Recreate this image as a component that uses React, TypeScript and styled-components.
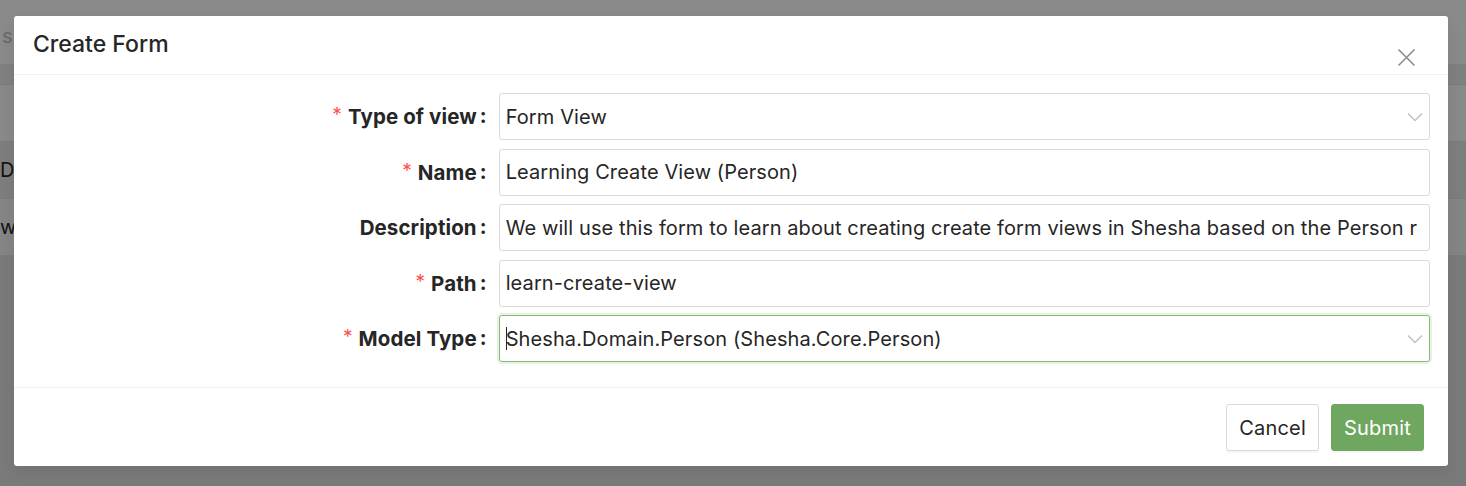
import React from 'react'
import styled, { createGlobalStyle } from 'styled-components'

const GlobalStyle = createGlobalStyle`
  * { box-sizing: border-box; }
  body {
    margin: 0;
    font-family: Inter, "Noto Sans", "Liberation Sans", sans-serif;
    color: #262626;
  }
`

const Page = styled.div`
  position: relative;
  width: 1466px;
  height: 486px;
  overflow: hidden;
  background: #dedede;
`

/* the page behind the dialog, only its edges show */
const BackPage = styled.div`
  display: flex;
  flex-direction: column;
`

const BackToolbar = styled.div`
  height: 65px;
  background: #fbfbfb;
  border-bottom: 1px solid #e6e6e6;
  padding: 24px 0 0 2px;
  font-size: 20px;
  color: #bfbfbf;
`

const BackRow = styled.div<{ $bg: string; $h: number }>`
  height: ${(p) => p.$h}px;
  background: ${(p) => p.$bg};
  border-bottom: 1px solid #e0e0e0;
  display: flex;
  align-items: center;
  font-size: 20px;
  color: #262626;
  white-space: nowrap;
  overflow: hidden;
`

const Backdrop = styled.div`
  position: absolute;
  inset: 0;
  background: rgba(0, 0, 0, 0.45);
`

const Modal = styled.div`
  position: absolute;
  top: 16px;
  left: 14px;
  width: 1434px;
  background: #fff;
  border-radius: 3px;
  box-shadow: 0 6px 16px rgba(0, 0, 0, 0.08);
`

const Header = styled.div`
  height: 59px;
  padding: 0 19px;
  display: flex;
  align-items: center;
  border-bottom: 1px solid #f0f0f0;
`

const Title = styled.div`
  font-size: 23px;
  font-weight: 500;
  color: #262626;
  padding-bottom: 2px;
`

const CloseButton = styled.button`
  position: absolute;
  top: 31px;
  right: 32px;
  width: 20px;
  height: 20px;
  padding: 0;
  border: 0;
  background: none;
  display: flex;
  align-items: center;
  justify-content: center;
  cursor: pointer;
`

const Body = styled.div`
  padding: 18px 18px 25px 19px;
  display: flex;
  flex-direction: column;
  gap: 8.5px;
`

const Row = styled.div`
  display: grid;
  grid-template-columns: 33.333% 1fr;
  align-items: center;
`

const Label = styled.label`
  display: flex;
  justify-content: flex-end;
  align-items: center;
  font-size: 20.5px;
  font-weight: 700;
  letter-spacing: 0.1px;
  color: #262626;
  white-space: nowrap;
`

const Required = styled.span`
  color: #ff4d4f;
  font-size: 19px;
  font-weight: 400;
  margin-right: 6px;
  position: relative;
  top: -2px;
`

const Colon = styled.span`
  margin: 0 12px 0 3px;
  position: relative;
  top: -1px;
`

const Field = styled.div<{ $focused?: boolean }>`
  height: 47px;
  display: flex;
  align-items: center;
  padding: 0 30px 0 6px;
  position: relative;
  border: 1px solid ${(p) => (p.$focused ? '#86bb76' : '#d9d9d9')};
  box-shadow: ${(p) => (p.$focused ? '0 0 0 2px rgba(111, 166, 95, 0.16)' : 'none')};
  border-radius: 3px;
  font-size: 20px;
  letter-spacing: 0.1px;
  color: #262626;
  white-space: nowrap;
  overflow: hidden;
`

const Caret = styled.span`
  display: inline-block;
  width: 1.5px;
  height: 23px;
  background: #262626;
  margin-right: -1.5px;
`

const Chevron = styled.svg`
  position: absolute;
  right: 6px;
  top: 50%;
  transform: translateY(-50%);
`

const Footer = styled.div`
  border-top: 1px solid #f0f0f0;
  padding: 16px 24px 15px;
  display: flex;
  justify-content: flex-end;
  gap: 12px;
`

const Button = styled.button<{ $primary?: boolean }>`
  height: 47px;
  padding: 0 12px;
  font-family: inherit;
  font-size: 20px;
  letter-spacing: 0.2px;
  border-radius: 3px;
  border: 1px solid ${(p) => (p.$primary ? '#70a760' : '#d9d9d9')};
  background: ${(p) => (p.$primary ? '#70a760' : '#fff')};
  color: ${(p) => (p.$primary ? '#fff' : '#262626')};
  box-shadow: 0 2px 0 rgba(0, 0, 0, 0.03);
  cursor: pointer;
`

const ChevronDown = () => (
  <Chevron width="16" height="10" viewBox="0 0 16 10" fill="none">
    <path d="M1 1.5 L8 8.5 L15 1.5" stroke="#bfbfbf" strokeWidth="1.3" />
  </Chevron>
)

type FieldDef = {
  label: string
  value: string
  required?: boolean
  select?: boolean
  focused?: boolean
}

const fields: FieldDef[] = [
  { label: 'Type of view', value: 'Form View', required: true, select: true },
  { label: 'Name', value: 'Learning Create View (Person)', required: true },
  {
    label: 'Description',
    value: 'We will use this form to learn about creating create form views in Shesha based on the Person r',
  },
  { label: 'Path', value: 'learn-create-view', required: true },
  {
    label: 'Model Type',
    value: 'Shesha.Domain.Person (Shesha.Core.Person)',
    required: true,
    select: true,
    focused: true,
  },
]

const App: React.FC = () => {
  return (
    <Page>
      <GlobalStyle />
      <BackPage>
        <BackToolbar>s</BackToolbar>
        <BackRow $bg="#e9e9e9" $h={20} />
        <BackRow $bg="#f9f9f9" $h={57} />
        <BackRow $bg="#e6e6e6" $h={57}>De</BackRow>
        <BackRow $bg="#f2f2f2" $h={57}>w</BackRow>
      </BackPage>
      <Backdrop />
      <Modal>
        <Header>
          <Title>Create Form</Title>
        </Header>
        <CloseButton aria-label="Close">
          <svg width="19" height="19" viewBox="0 0 19 19">
            <path d="M1.5 1.5 L17.5 17.5 M17.5 1.5 L1.5 17.5" stroke="#8c8c8c" strokeWidth="1.6" />
          </svg>
        </CloseButton>
        <Body>
          {fields.map((f) => (
            <Row key={f.label}>
              <Label>
                {f.required && <Required>*</Required>}
                {f.label}
                <Colon>:</Colon>
              </Label>
              <Field $focused={f.focused}>
                {f.focused && <Caret />}
                {f.value}
                {f.select && <ChevronDown />}
              </Field>
            </Row>
          ))}
        </Body>
        <Footer>
          <Button>Cancel</Button>
          <Button $primary>Submit</Button>
        </Footer>
      </Modal>
    </Page>
  )
}

export default App
